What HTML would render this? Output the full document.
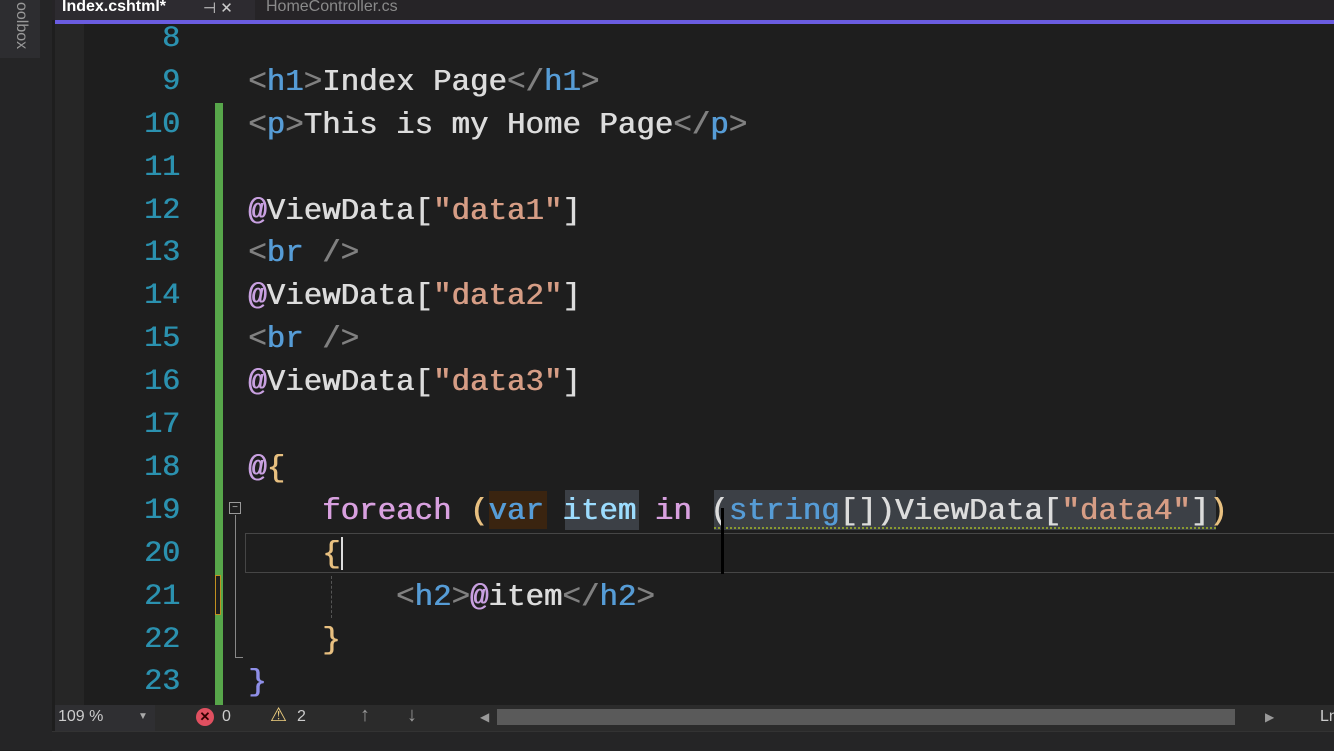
<!DOCTYPE html>
<html><head><style>
body{margin:0;width:1334px;height:750px;background:#1e1e1e;overflow:hidden;position:relative;font-family:"Liberation Mono",monospace}
.a{position:absolute}
.ln{position:absolute;left:100px;width:80px;text-align:right;color:#2b91af;font-size:30px;line-height:43px;text-shadow:0.6px 0 0 currentColor}
.cd{position:absolute;left:248px;font-size:30.8px;line-height:43px;white-space:pre;color:#dcdcdc;text-shadow:0.7px 0 0 currentColor}
.cd span{text-shadow:0.7px 0 0 currentColor}
.t{color:#808080}.n{color:#569cd6}.s{color:#d69d85}.at{color:#c8a0e0}.k{color:#d8a0df}.b{color:#e8c080}.p{color:#8f8fe8}
</style></head><body>
<div class="a" style="left:0;top:0;width:52px;height:750px;background:#252526"></div>
<div class="a" style="left:0;top:0;width:40px;height:58px;background:#2d2d30"></div>
<div class="a" style="left:12px;top:2px;color:#999;font:16px 'Liberation Sans',sans-serif;writing-mode:vertical-rl">oolbox</div>
<div class="a" style="left:52px;top:0;width:1282px;height:20px;background:#262427"></div>
<div class="a" style="left:55px;top:0;width:200px;height:20px;background:#2d2b30"></div>
<div class="a" style="left:62px;top:-2px;color:#fff;font:bold 16px 'Liberation Sans',sans-serif">Index.cshtml*</div>
<div class="a" style="left:203px;top:-1px;color:#ccc;font:15px 'Liberation Sans',sans-serif">⊣ ✕</div>
<div class="a" style="left:266px;top:-2px;color:#8a8a8a;font:16px 'Liberation Sans',sans-serif">HomeController.cs</div>
<div class="a" style="left:55px;top:20px;width:1279px;height:4px;background:#6a5ce0"></div>
<div class="a" style="left:55px;top:24px;width:29px;height:681px;background:#262626"></div>
<div class="ln" style="top:18px">8</div><div class="ln" style="top:61px">9</div><div class="ln" style="top:104px">10</div><div class="ln" style="top:147px">11</div><div class="ln" style="top:190px">12</div><div class="ln" style="top:232px">13</div><div class="ln" style="top:275px">14</div><div class="ln" style="top:318px">15</div><div class="ln" style="top:361px">16</div><div class="ln" style="top:404px">17</div><div class="ln" style="top:447px">18</div><div class="ln" style="top:490px">19</div><div class="ln" style="top:533px">20</div><div class="ln" style="top:576px">21</div><div class="ln" style="top:619px">22</div><div class="ln" style="top:661px">23</div>
<div class="a" style="left:215px;top:103px;width:8px;height:602px;background:#57a64a"></div>
<div class="a" style="left:215px;top:575px;width:6px;height:40px;background:#1e1e1e;border:1px solid #c09020;box-sizing:border-box"></div>
<div class="a" style="left:229px;top:502px;width:12px;height:12px;border:1px solid #999;box-sizing:border-box;color:#bbb;font:10px/9px sans-serif;text-align:center">−</div>
<div class="a" style="left:235px;top:515px;width:1px;height:142px;background:#888"></div>
<div class="a" style="left:235px;top:657px;width:8px;height:1px;background:#888"></div>
<div class="a" style="left:245px;top:533px;width:1089px;height:40px;border:1px solid #464646;box-sizing:border-box;border-right:none"></div>
<div class="a" style="left:331px;top:576px;width:0;height:42px;border-left:1px dashed #555"></div>
<div class="a" style="left:489px;top:491px;width:58px;height:38px;background:#3a2410"></div>
<div class="a" style="left:565px;top:490px;width:74px;height:40px;background:#3c4046"></div>
<div class="a" style="left:714px;top:490px;width:502px;height:40px;background:#3c4046"></div>
<div class="a" style="left:714px;top:524px;width:502px;height:3px;border-bottom:2px dotted #8a9a30"></div>
<div class="cd" style="top:61px"><span class="t">&lt;</span><span class="n">h1</span><span class="t">&gt;</span>Index Page<span class="t">&lt;/</span><span class="n">h1</span><span class="t">&gt;</span></div>
<div class="cd" style="top:104px"><span class="t">&lt;</span><span class="n">p</span><span class="t">&gt;</span>This is my Home Page<span class="t">&lt;/</span><span class="n">p</span><span class="t">&gt;</span></div>
<div class="cd" style="top:190px"><span class="at">@</span>ViewData[<span class="s">"data1"</span>]</div>
<div class="cd" style="top:232px"><span class="t">&lt;</span><span class="n">br</span> <span class="t">/&gt;</span></div>
<div class="cd" style="top:275px"><span class="at">@</span>ViewData[<span class="s">"data2"</span>]</div>
<div class="cd" style="top:318px"><span class="t">&lt;</span><span class="n">br</span> <span class="t">/&gt;</span></div>
<div class="cd" style="top:361px"><span class="at">@</span>ViewData[<span class="s">"data3"</span>]</div>
<div class="cd" style="top:447px"><span class="at">@</span><span class="b">{</span></div>
<div class="cd" style="top:490px">    <span class="k">foreach</span> <span class="b">(</span><span class="n">var</span> <span style="color:#9cdcfe">item</span> <span class="k">in</span> (<span class="n">string</span>[])ViewData[<span class="s">"data4"</span>]<span class="b">)</span></div>
<div class="cd" style="top:533px">    <span class="b">{</span></div>
<div class="a" style="left:341px;top:537px;width:2px;height:33px;background:#ddd"></div>
<div class="cd" style="top:576px">        <span class="t">&lt;</span><span class="n">h2</span><span class="t">&gt;</span><span class="at">@</span>item<span class="t">&lt;/</span><span class="n">h2</span><span class="t">&gt;</span></div>
<div class="cd" style="top:619px">    <span class="b">}</span></div>
<div class="cd" style="top:661px"><span class="p">}</span></div>
<div class="a" style="left:721px;top:508px;width:3px;height:66px;background:#000"></div>
<div class="a" style="left:55px;top:705px;width:1279px;height:26px;background:#2b2b2b"></div>
<div class="a" style="left:55px;top:705px;width:100px;height:26px;background:#2f2f32"></div>
<div class="a" style="left:58px;top:708px;color:#ccc;font:16px 'Liberation Sans',sans-serif">109 %</div>
<div class="a" style="left:138px;top:711px;color:#aaa;font:10px sans-serif">▼</div>
<div class="a" style="left:196px;top:708px;width:18px;height:18px;border-radius:9px;background:#e05060;color:#300;font:bold 13px/18px sans-serif;text-align:center">✕</div>
<div class="a" style="left:222px;top:708px;color:#ccc;font:16px 'Liberation Sans',sans-serif">0</div>
<div class="a" style="left:270px;top:704px;color:#f0d080;font:19px sans-serif">⚠</div>
<div class="a" style="left:297px;top:708px;color:#ccc;font:16px 'Liberation Sans',sans-serif">2</div>
<div class="a" style="left:360px;top:704px;color:#999;font:20px sans-serif">↑</div>
<div class="a" style="left:407px;top:704px;color:#999;font:20px sans-serif">↓</div>
<div class="a" style="left:480px;top:710px;color:#999;font:12px sans-serif">◀</div>
<div class="a" style="left:497px;top:709px;width:738px;height:16px;background:#5a5a5a"></div>
<div class="a" style="left:1265px;top:710px;color:#999;font:12px sans-serif">▶</div>
<div class="a" style="left:1320px;top:708px;color:#ccc;font:16px 'Liberation Sans',sans-serif">Ln</div>
<div class="a" style="left:52px;top:731px;width:1282px;height:19px;background:#252526;border-top:1px solid #333"></div>
</body></html>
